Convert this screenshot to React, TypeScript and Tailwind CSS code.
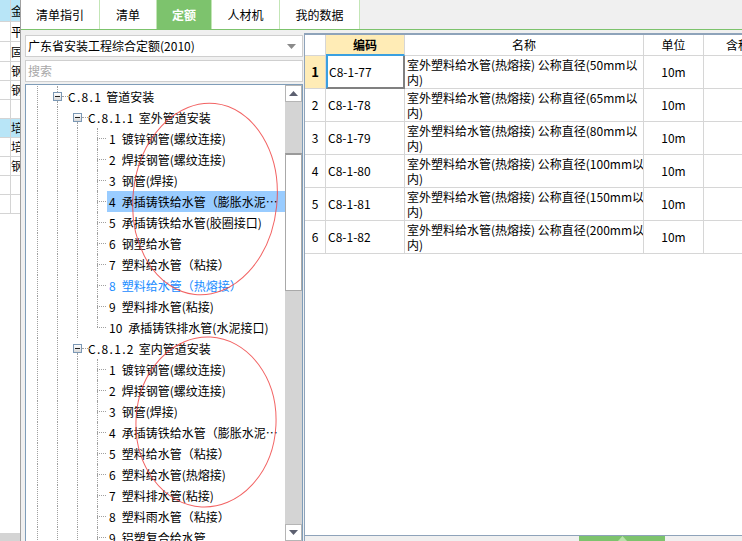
import React from 'react'

type TreeRow = {
  depth: number
  kind: 'exp' | 'leaf'
  num?: string
  code?: string
  text: string
  last?: boolean
  sel?: boolean
  blue?: boolean
  lineAbove?: boolean
}

const treeRows: TreeRow[] = [
  { depth: 1, kind: 'exp', code: 'C.8.1', text: '管道安装', lineAbove: true },
  { depth: 2, kind: 'exp', code: 'C.8.1.1', text: '室外管道安装' },
  { depth: 3, kind: 'leaf', num: '1', text: '镀锌钢管(螺纹连接)' },
  { depth: 3, kind: 'leaf', num: '2', text: '焊接钢管(螺纹连接)' },
  { depth: 3, kind: 'leaf', num: '3', text: '钢管(焊接)' },
  { depth: 3, kind: 'leaf', num: '4', text: '承插铸铁给水管（膨胀水泥…', sel: true },
  { depth: 3, kind: 'leaf', num: '5', text: '承插铸铁给水管(胶圈接口)' },
  { depth: 3, kind: 'leaf', num: '6', text: '钢塑给水管' },
  { depth: 3, kind: 'leaf', num: '7', text: '塑料给水管（粘接）' },
  { depth: 3, kind: 'leaf', num: '8', text: '塑料给水管（热熔接）', blue: true },
  { depth: 3, kind: 'leaf', num: '9', text: '塑料排水管(粘接)' },
  { depth: 3, kind: 'leaf', num: '10', text: '承插铸铁排水管(水泥接口)', last: true },
  { depth: 2, kind: 'exp', code: 'C.8.1.2', text: '室内管道安装' },
  { depth: 3, kind: 'leaf', num: '1', text: '镀锌钢管(螺纹连接)' },
  { depth: 3, kind: 'leaf', num: '2', text: '焊接钢管(螺纹连接)' },
  { depth: 3, kind: 'leaf', num: '3', text: '钢管(焊接)' },
  { depth: 3, kind: 'leaf', num: '4', text: '承插铸铁给水管（膨胀水泥…' },
  { depth: 3, kind: 'leaf', num: '5', text: '塑料给水管（粘接）' },
  { depth: 3, kind: 'leaf', num: '6', text: '塑料给水管(热熔接)' },
  { depth: 3, kind: 'leaf', num: '7', text: '塑料排水管(粘接)' },
  { depth: 3, kind: 'leaf', num: '8', text: '塑料雨水管（粘接）' },
  { depth: 3, kind: 'leaf', num: '9', text: '铝塑复合给水管' },
]

const quotaRows = [
  { code: 'C8-1-77', size: '50' },
  { code: 'C8-1-78', size: '65' },
  { code: 'C8-1-79', size: '80' },
  { code: 'C8-1-80', size: '100' },
  { code: 'C8-1-81', size: '150' },
  { code: 'C8-1-82', size: '200' },
]

const leftStrip = [
  { h: 'h-[22px]', ch: '金', blue: true },
  { h: 'h-[20px]', ch: '平' },
  { h: 'h-[20px]', ch: '固' },
  { h: 'h-[19px]', ch: '钢' },
  { h: 'h-[19px]', ch: '钢' },
  { h: 'h-[19px]', ch: '' },
  { h: 'h-[19px]', ch: '培', blue: true },
  { h: 'h-[19px]', ch: '培' },
  { h: 'h-[19px]', ch: '钢' },
  { h: 'h-[19px]', ch: '' },
  { h: 'h-[19px]', ch: '' },
]

const tabs = [
  { label: '清单指引', w: 'w-[79px]' },
  { label: '清单', w: 'w-[57px]' },
  { label: '定额', w: 'w-[55px]', active: true },
  { label: '人材机', w: 'w-[68px]' },
  { label: '我的数据', w: 'w-[80px]' },
]

function Gutter() {
  return (
    <span className="w-[20px] h-full flex justify-center shrink-0">
      <span className="h-full border-l border-dotted border-[#a0a0a0]" />
    </span>
  )
}

function Expander({ above }: { above?: boolean }) {
  return (
    <span className="w-[20px] h-full shrink-0 flex flex-col items-center">
      <span className={`flex-1 border-l border-dotted ${above ? 'border-[#a0a0a0]' : 'border-transparent'}`} />
      <span className="relative w-[9px] h-[9px] border border-[#7b98b5] bg-gradient-to-b from-white to-[#d8d8d8] flex items-center justify-center">
        <span className="w-[5px] h-px bg-[#1f1f1f]" />
        <span className="absolute left-[8px] top-[3px] w-[8px] border-t border-dotted border-[#a0a0a0]" />
      </span>
      <span className="flex-1 border-l border-dotted border-[#a0a0a0]" />
    </span>
  )
}

function Connector({ last }: { last?: boolean }) {
  return (
    <span className="w-[20px] h-full shrink-0 flex flex-col pl-[10px]">
      <span className="flex-1 border-l border-dotted border-[#a0a0a0]" />
      <span className="w-[9px] border-t border-dotted border-[#a0a0a0]" />
      <span className={`flex-1 border-l border-dotted ${last ? 'border-transparent' : 'border-[#a0a0a0]'}`} />
    </span>
  )
}

function TreeLine({ row }: { row: TreeRow }) {
  const gutters = Array.from({ length: row.depth })
  return (
    <div className="flex h-[21px] items-stretch">
      {gutters.map((_, i) => (
        <Gutter key={i} />
      ))}
      {row.kind === 'exp' ? <Expander above={row.lineAbove} /> : <Connector last={row.last} />}
      {row.kind === 'exp' ? (
        <span className="flex items-center pl-[1px] whitespace-nowrap">
          <span className="tracking-[1.3px]">{row.code}</span>
          <span className="ml-[4px]">{row.text}</span>
        </span>
      ) : (
        <span
          className={`flex-1 flex items-center pl-[2px] whitespace-nowrap overflow-hidden ${
            row.sel ? 'bg-[#99ccff]' : ''
          } ${row.blue ? 'text-[#1a8cff]' : 'text-black'}`}
        >
          <span>{row.num}</span>
          <span className="ml-[6px]">{row.text}</span>
        </span>
      )}
    </div>
  )
}

function Triangle({ up, color }: { up?: boolean; color: string }) {
  return (
    <svg width="9" height="5" viewBox="0 0 9 5">
      <polygon points={up ? '0,5 9,5 4.5,0' : '0,0 9,0 4.5,5'} fill={color} />
    </svg>
  )
}

export default function App() {
  return (
    <div className="relative w-[742px] h-[541px] overflow-hidden bg-white text-[12px] leading-[14px] text-black font-['Noto_Sans_CJK_SC','Noto_Sans',sans-serif] flex">
      {/* background sheet on the left */}
      <div className="w-[20px] shrink-0 flex flex-col bg-white">
        {leftStrip.map((r, i) => (
          <div key={i} className={`${r.h} flex border-b border-[#d4d4d4] ${r.blue ? 'bg-[#b8e5f7]' : ''}`}>
            <div className="w-[11px] border-r border-[#d4d4d4]" />
            <div className="w-[9px] overflow-hidden flex items-center whitespace-nowrap">{r.ch}</div>
          </div>
        ))}
        <div className="flex-1" />
        <div className="h-[8px] bg-[#d4d4d4]" />
      </div>

      {/* quota panel */}
      <div className="flex-1 flex flex-col bg-[#f0f0f0] border-l border-[#a0a0a0]">
        <div className="h-[30px] flex border-b border-[#7cc36c] shrink-0">
          {tabs.map((t) => (
            <div
              key={t.label}
              className={`${t.w} flex items-center justify-center border-r border-[#c3e6b6] ${
                t.active ? 'bg-[#7dc36d] text-white font-bold' : 'bg-white text-black'
              }`}
            >
              {t.label}
            </div>
          ))}
        </div>

        <div className="flex-1 flex min-h-0">
          {/* left: quota tree */}
          <div className="w-[283px] shrink-0 flex flex-col pt-[5px] pl-[4px] pr-[1px]">
            <div className="h-[22px] bg-white border border-[#cfcfcf] flex items-center justify-between pl-[2px] pr-[6px]">
              <span className="whitespace-nowrap">广东省安装工程综合定额(2010)</span>
              <Triangle color="#8a8a8a" />
            </div>
            <div className="h-[22px] mt-[3px] bg-white border border-[#cfcfcf] flex items-center pl-[2px] text-[#a8a8a8]">
              搜索
            </div>
            <div className="flex-1 mt-[2px] bg-white border border-[#7f9db9] border-b-0 flex min-h-0">
              <div className="flex-1 overflow-hidden pt-[1px] pl-[1px]">
                {treeRows.map((r, i) => (
                  <TreeLine key={i} row={r} />
                ))}
              </div>
              <div className="w-[17px] shrink-0 flex flex-col bg-[#d4d4d4]">
                <div className="h-[17px] bg-white border border-[#b5b5b5] flex items-center justify-center">
                  <Triangle up color="#5c6070" />
                </div>
                <div className="h-[51px]" />
                <div className="h-[138px] bg-white border border-[#a9a9a9] border-t-2 border-t-[#9a9a9a]" />
                <div className="flex-1" />
                <div className="h-[17px] bg-white border border-[#b5b5b5] flex items-center justify-center">
                  <Triangle color="#5c6070" />
                </div>
              </div>
            </div>
          </div>

          {/* right: quota list */}
          <div className="flex-1 flex flex-col mt-[3px] bg-white border-l border-t-2 border-[#8ea3ba] min-w-0">
            <div className="grid grid-cols-[21px_79px_239px_60px_1fr] overflow-hidden">
              <div className="h-[21px] border-r border-b border-[#d6d6d6]" />
              <div className="h-[21px] border-r border-[#d6d6d6] border-b-2 border-b-[#3aa0e0] bg-[#ffecb6] flex items-center justify-center font-bold">
                编码
              </div>
              <div className="h-[21px] border-r border-b border-[#d6d6d6] flex items-center justify-center">名称</div>
              <div className="h-[21px] border-r border-b border-[#d6d6d6] flex items-center justify-center">单位</div>
              <div className="h-[21px] border-b border-[#d6d6d6] flex items-center pl-[22px] whitespace-nowrap">含税价</div>

              {quotaRows.map((q, i) => (
                <React.Fragment key={q.code}>
                  <div
                    className={`h-[33px] border-r border-b border-[#d6d6d6] flex items-center justify-center ${
                      i === 0 ? 'bg-[#ffecb6] font-bold font-[\'Liberation_Serif\',serif] text-[13px]' : ''
                    }`}
                  >
                    {i + 1}
                  </div>
                  <div
                    className={`h-[33px] flex items-center pl-[1px] ${
                      i === 0
                        ? 'border-l-2 border-l-[#3aa0e0] border-r-2 border-r-[#808080] border-b-2 border-b-[#808080]'
                        : 'border-r border-b border-[#d6d6d6] pl-[2px]'
                    }`}
                  >
                    {q.code}
                  </div>
                  <div className="h-[33px] border-r border-b border-[#d6d6d6] pl-[2px] pt-[1px] leading-[15px] overflow-hidden">
                    <div className="whitespace-nowrap">室外塑料给水管(热熔接) 公称直径({q.size}mm以</div>
                    <div>内)</div>
                  </div>
                  <div className="h-[33px] border-r border-b border-[#d6d6d6] flex items-center justify-center">10m</div>
                  <div className="h-[33px] border-b border-[#d6d6d6]" />
                </React.Fragment>
              ))}
            </div>
            <div className="flex-1" />
            <div className="h-[6px] border-t border-[#8ea3ba] bg-[#f0f0f0] flex">
              <div className="w-[274px]" />
              <div className="w-[86px] bg-[#7dc36d] flex justify-center items-start">
                <Triangle up color="#b8e2aa" />
              </div>
            </div>
          </div>
        </div>
      </div>

      {/* hand-drawn red marks */}
      <svg className="absolute inset-0 pointer-events-none" width="742" height="541">
        <ellipse cx="205" cy="199" rx="72" ry="96" transform="rotate(6 205 199)" fill="none" stroke="#f04848" strokeWidth="1" opacity="0.85" />
        <ellipse cx="206" cy="422" rx="70" ry="85" transform="rotate(3 206 422)" fill="none" stroke="#f04848" strokeWidth="1" opacity="0.85" />
      </svg>
    </div>
  )
}
